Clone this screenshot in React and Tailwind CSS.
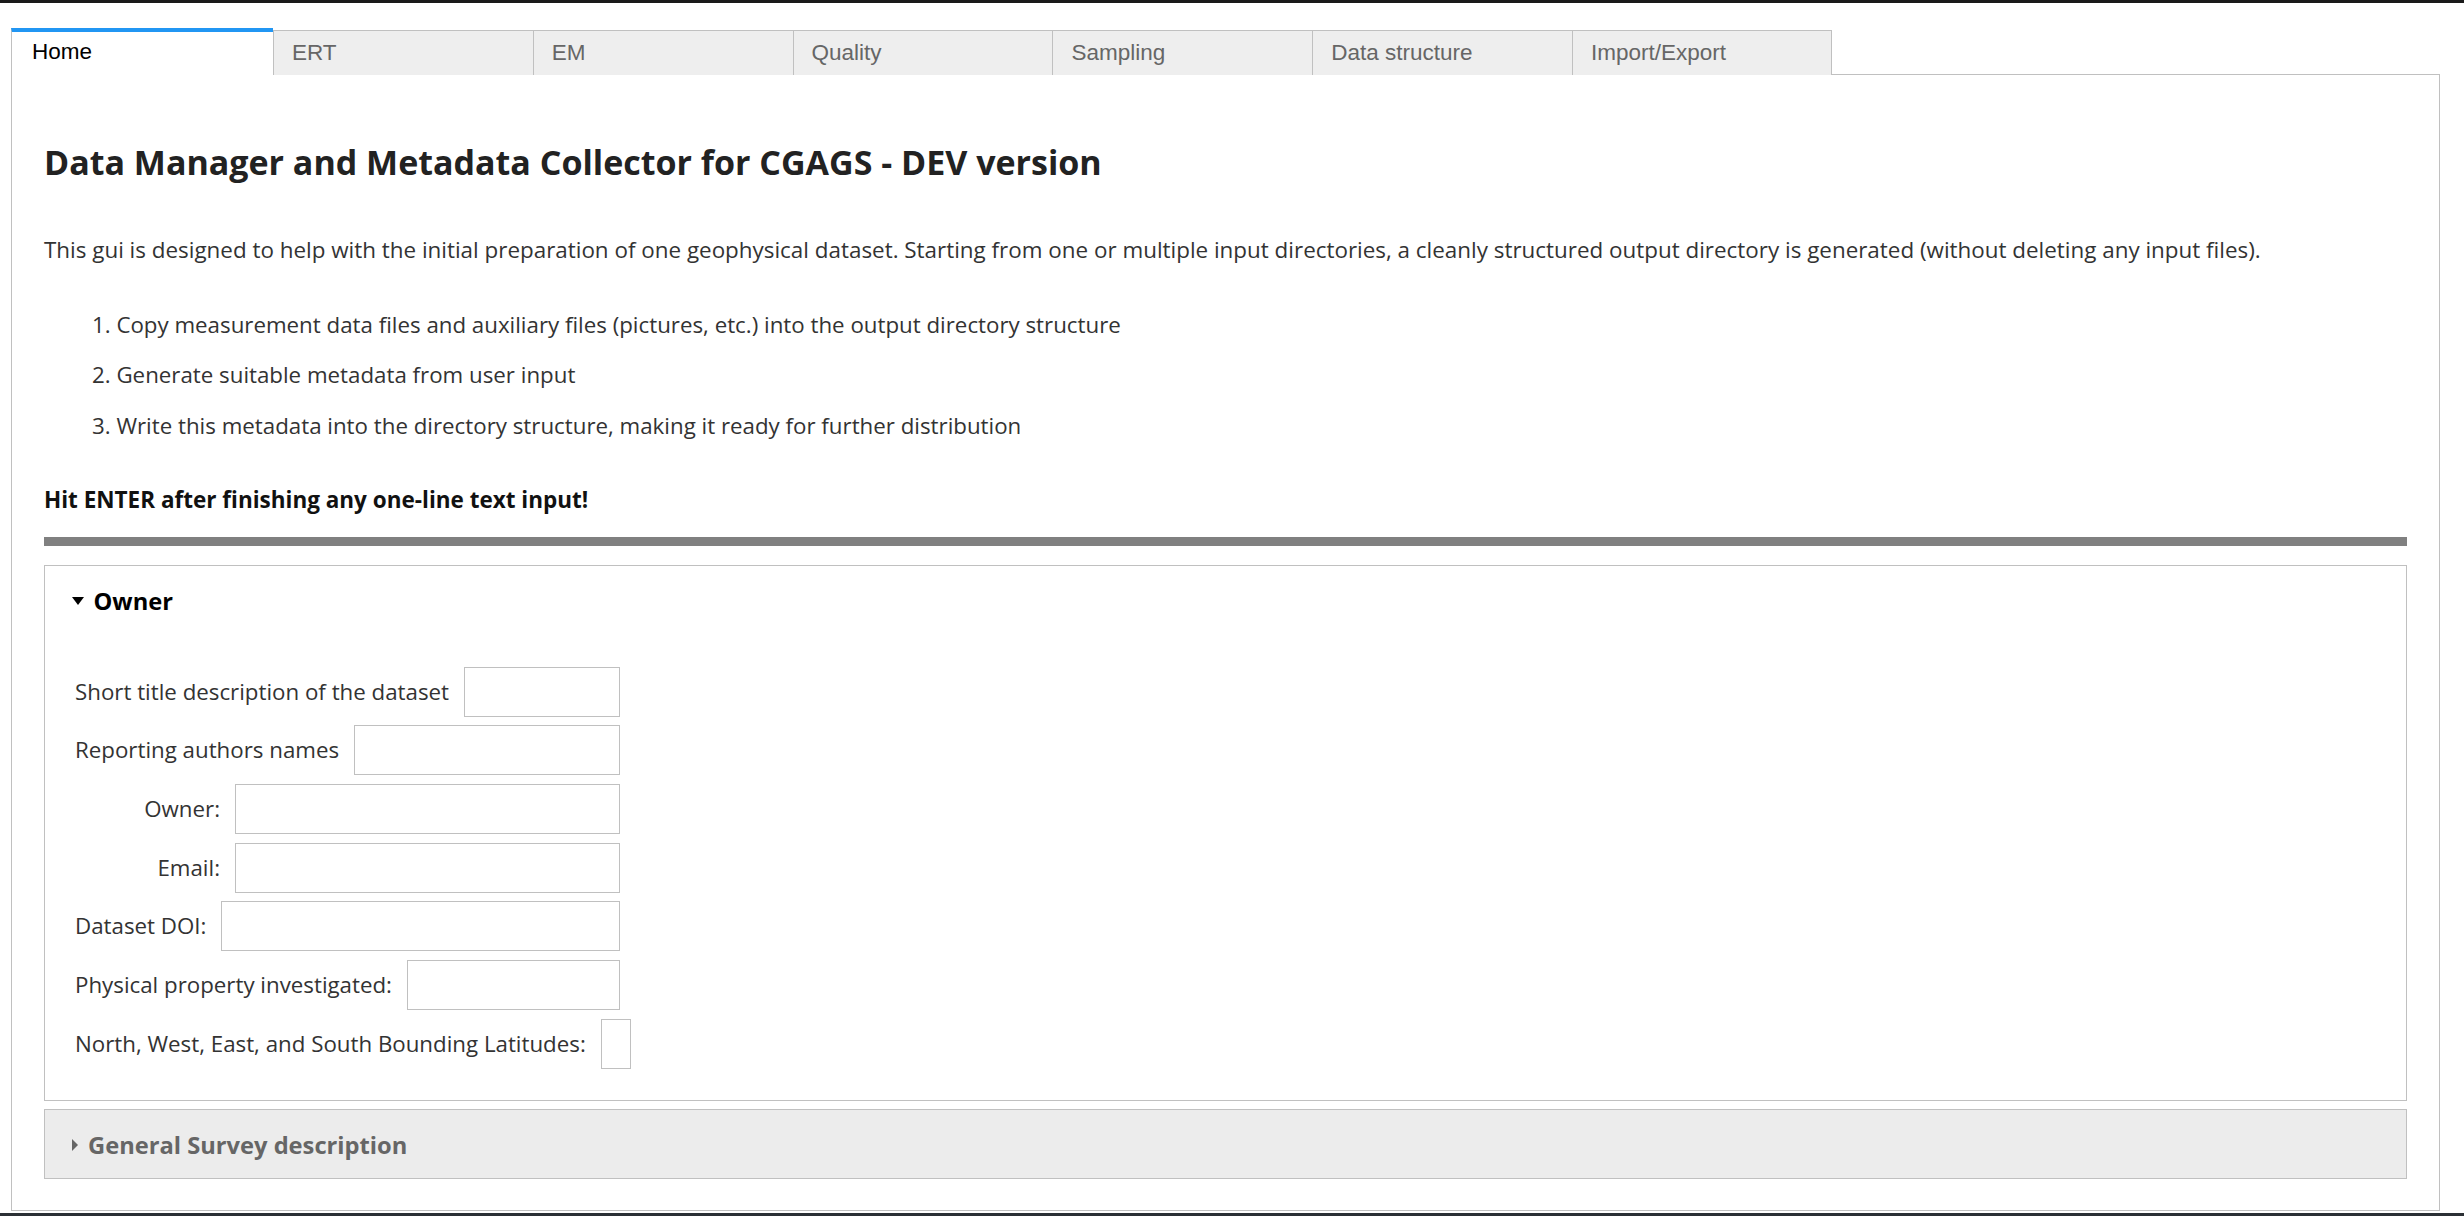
import React from "react";

const tabs = ["ERT", "EM", "Quality", "Sampling", "Data structure", "Import/Export"];

const rows = [
  { label: "Short title description of the dataset" },
  { label: "Reporting authors names" },
  { label: "Owner:", fixed: true },
  { label: "Email:", fixed: true },
  { label: "Dataset DOI:" },
  { label: "Physical property investigated:" },
  { label: "North, West, East, and South Bounding Latitudes:" },
];

const steps = [
  "1. Copy measurement data files and auxiliary files (pictures, etc.) into the output directory structure",
  "2. Generate suitable metadata from user input",
  "3. Write this metadata into the directory structure, making it ready for further distribution",
];

function FormRow({ label, fixed }) {
  return (
    <div className="flex h-[50px] w-[545px] items-center gap-[15px] text-[22.3px] leading-[34px]">
      <label className={fixed ? "w-[145px] shrink-0 whitespace-nowrap text-right" : "shrink-0 whitespace-nowrap"}>
        {label}
      </label>
      <input
        type="text"
        className="h-[50px] min-w-[30px] flex-1 border border-[#c0c0c0] bg-white outline-none"
      />
    </div>
  );
}

export default function App() {
  return (
    <div className="flex min-h-[1216px] flex-col bg-white font-['Open_Sans','Noto_Sans',sans-serif] text-[#333]">
      <div className="h-[3px] bg-[#1a1a1a]" />

      {/* Tabs */}
      <div className="relative z-10 -mb-px ml-[11px] mt-[25px] flex items-end font-['Liberation_Sans',Arial,sans-serif] text-[22.5px]">
        <div className="flex h-[47px] w-[262px] items-center border-l border-t-4 border-l-[#c0c0c0] border-t-[#2196f3] bg-white pb-[3px] pl-[20px] text-black">
          Home
        </div>
        {tabs.map((t, i) => (
          <div
            key={t}
            className={
              i === tabs.length - 1
                ? "flex h-[45px] w-[259.8px] items-center border-x border-t border-[#c0c0c0] bg-[#eeeeee] pl-[18px] text-[#666]"
                : "flex h-[45px] w-[259.8px] items-center border-l border-t border-[#c0c0c0] bg-[#eeeeee] pl-[18px] text-[#666]"
            }
          >
            {t}
          </div>
        ))}
      </div>

      {/* Panel */}
      <div className="ml-[11px] w-[2429px] border border-[#c0c0c0] px-[32px] pb-[31px] pt-[67.3px]">
        <h1 className="text-[34px] font-bold leading-[41px] text-[#222]">
          Data Manager and Metadata Collector for CGAGS - DEV version
        </h1>
        <p className="mt-[50px] whitespace-nowrap text-[22.42px] leading-[34px]">
          This gui is designed to help with the initial preparation of one geophysical dataset. Starting from one or multiple input directories, a cleanly structured output directory is generated (without deleting any input files).
        </p>
        <ol className="mt-[40.3px] flex flex-col gap-[16.8px] pl-[48px] text-[22.3px] leading-[34px]">
          {steps.map((s) => (
            <li key={s}>{s}</li>
          ))}
        </ol>
        <p className="mt-[40.25px] text-[22.5px] font-bold leading-[34px] text-[#111]">
          Hit ENTER after finishing any one-line text input!
        </p>
        <div className="mt-[19.4px] h-[9px] bg-[#808080]" />

        {/* Owner section */}
        <div className="mt-[19px] border border-[#c0c0c0] pb-[31px]">
          <div className="flex items-center gap-[9.5px] pl-[27px] pt-[18.5px] text-[23.7px] font-bold leading-[34px] text-black">
            <svg width="12" height="8" viewBox="0 0 12 8" className="shrink-0">
              <polygon points="0,0 12,0 6,8" fill="#000" />
            </svg>
            <span>Owner</span>
          </div>
          <div className="mt-[48.5px] flex flex-col gap-[8.67px] pl-[30px]">
            {rows.map((r) => (
              <FormRow key={r.label} {...r} />
            ))}
          </div>
        </div>

        {/* General Survey description */}
        <div className="mt-[8px] flex items-center gap-[10px] border border-[#c0c0c0] bg-[#ececec] pb-[15.5px] pl-[27px] pt-[18.5px] text-[23.7px] font-bold leading-[34px] text-[#666]">
          <svg width="6" height="12" viewBox="0 0 6 12" className="shrink-0">
            <polygon points="0,0 6,6 0,12" fill="#666" />
          </svg>
          <span>General Survey description</span>
        </div>
      </div>

      <div className="flex-1" />
      <div className="h-[3px] bg-[#2b3035]" />
    </div>
  );
}
